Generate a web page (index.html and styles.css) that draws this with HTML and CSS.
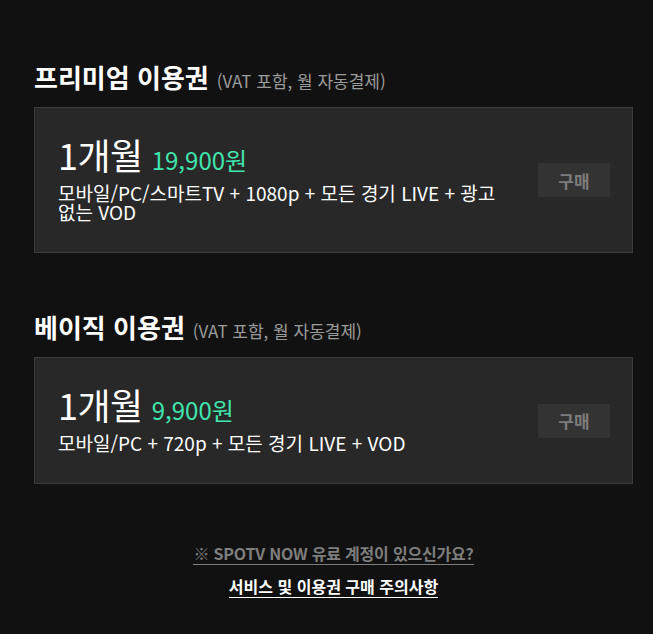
FILE: index.html
```html
<!DOCTYPE html>
<html lang="ko">
<head>
<meta charset="utf-8">
<link rel="stylesheet" href="styles.css">
</head>
<body>
<div class="page">
  <section class="plan-group">
    <h2 class="group-title">프리미엄 이용권 <span class="group-note">(VAT 포함, 월 자동결제)</span></h2>
    <div class="card card-premium">
      <div class="card-info">
        <div class="card-head"><span class="period">1개월</span><span class="price">19,900원</span></div>
        <p class="desc">모바일/PC/스마트TV + 1080p + 모든 경기 LIVE + 광고 없는 VOD</p>
      </div>
      <button class="buy">구매</button>
    </div>
  </section>
  <section class="plan-group second">
    <h2 class="group-title">베이직 이용권 <span class="group-note">(VAT 포함, 월 자동결제)</span></h2>
    <div class="card card-basic">
      <div class="card-info">
        <div class="card-head"><span class="period">1개월</span><span class="price">9,900원</span></div>
        <p class="desc">모바일/PC + 720p + 모든 경기 LIVE + VOD</p>
      </div>
      <button class="buy">구매</button>
    </div>
  </section>
  <div class="footer-links">
    <a class="link-account">※ SPOTV NOW 유료 계정이 있으신가요?</a>
    <a class="link-notice">서비스 및 이용권 구매 주의사항</a>
  </div>
</div>
</body>
</html>
```
FILE: styles.css
```css
html, body {
  margin: 0;
  padding: 0;
  background: #111111;
}
body {
  font-family: "Noto Sans CJK KR", "Noto Sans", sans-serif;
  color: #ffffff;
}
.page {
  width: 599px;
  padding: 59px 0 0 34px;
  box-sizing: content-box;
}
.plan-group {
  margin: 0;
}
.plan-group.second {
  margin-top: 56px;
}
.group-title {
  margin: 0;
  height: 36px;
  display: flex;
  align-items: baseline;
  gap: 8px;
  font-size: 26px;
  font-weight: 700;
  line-height: 36px;
}
.group-note {
  font-size: 17px;
  font-weight: 400;
  color: #9c9c9c;
}
.card {
  margin-top: 12px;
  background: #282828;
  border: 1px solid #3b3b3b;
  display: flex;
  align-items: center;
  justify-content: space-between;
  padding: 0 22px 0 23px;
  box-sizing: border-box;
}
.card-premium { height: 146px; }
.card-basic { height: 127px; }
.card-info {
  width: 455px;
  padding-bottom: 6px;
}
.card-head {
  display: flex;
  align-items: baseline;
  gap: 9px;
  line-height: 42px;
  height: 42px;
}
.period {
  font-size: 36px;
  font-weight: 400;
  letter-spacing: -0.5px;
}
.price {
  font-size: 24px;
  font-weight: 400;
  color: #3fe6ad;
}
.desc {
  margin: 8px 0 0;
  font-size: 19px;
  line-height: 19px;
}
.buy {
  width: 72px;
  height: 34px;
  background: #333333;
  border: none;
  color: #7c7c7c;
  font-family: inherit;
  font-size: 17px;
  font-weight: 700;
  padding: 0;
}
.footer-links {
  margin-top: 58px;
  display: flex;
  flex-direction: column;
  align-items: center;
  gap: 10px;
}
.footer-links a {
  font-size: 16px;
  font-weight: 700;
  line-height: 22px;
  border-bottom: 1px solid currentColor;
}
.link-account {
  color: #7e7e7e;
  letter-spacing: -0.2px;
}
.link-notice {
  color: #ffffff;
}
```
